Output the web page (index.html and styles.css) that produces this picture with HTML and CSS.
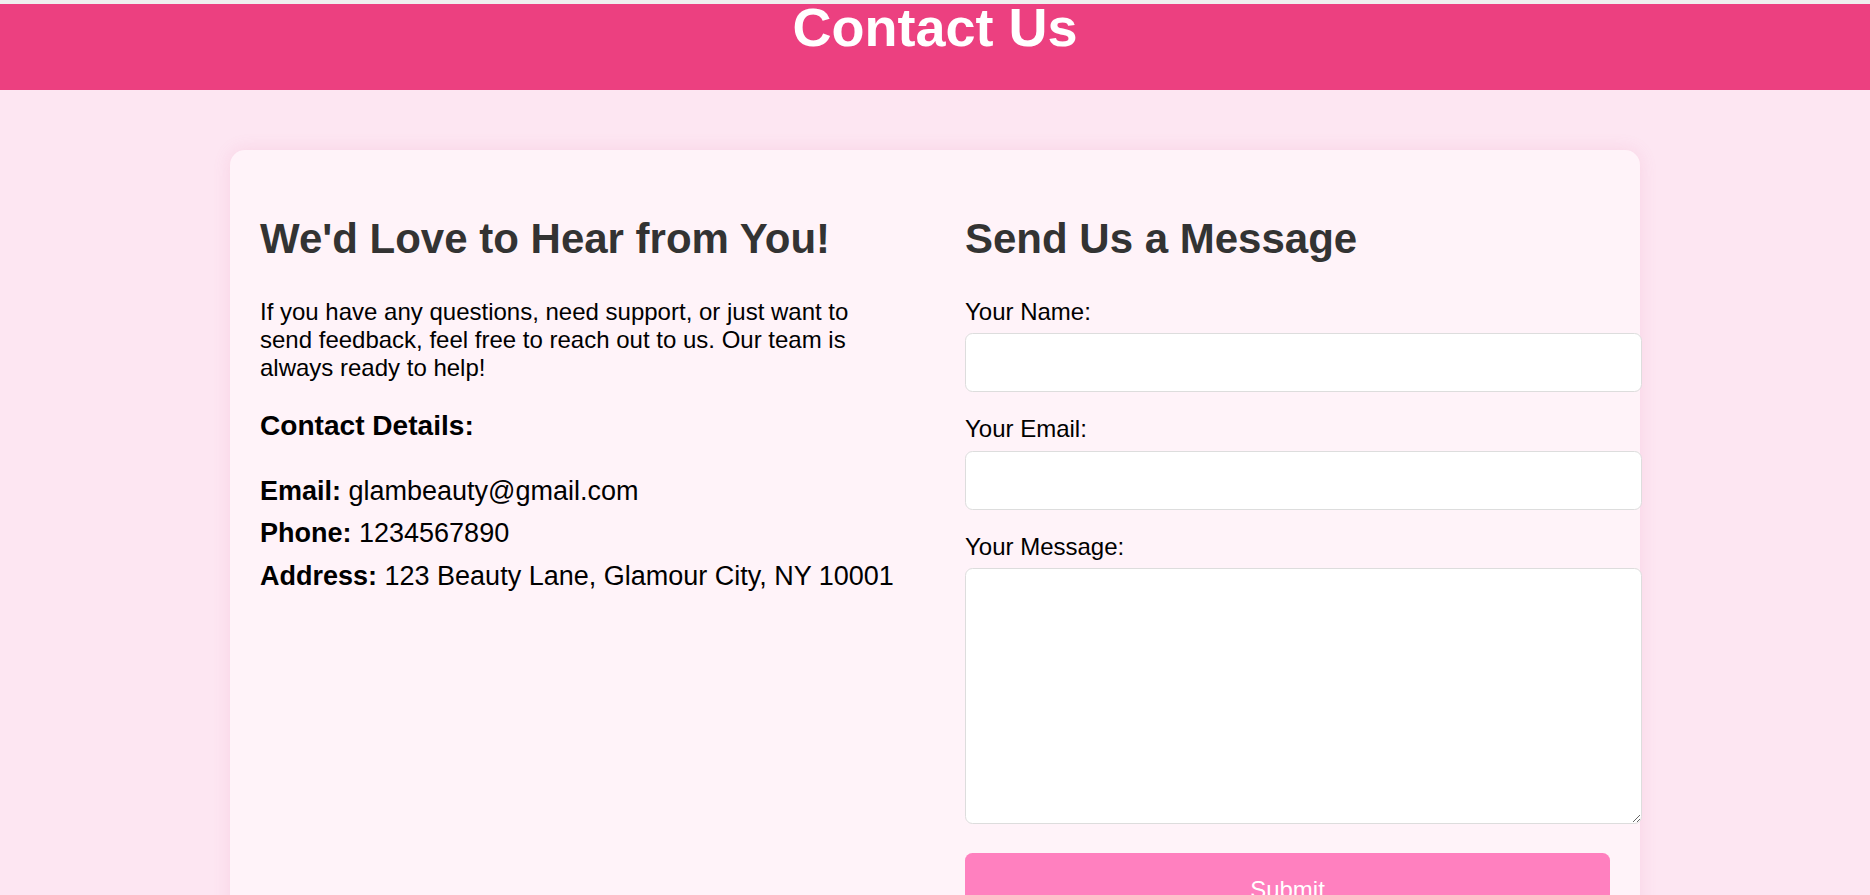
FILE: index.html
```html
<!DOCTYPE html>
<html lang="en">
<head>
<meta charset="utf-8">
<title>Contact Us</title>
<link rel="stylesheet" href="styles.css">
</head>
<body>
<div class="top-strip"></div>
<header class="site-header">
  <h1>Contact Us</h1>
</header>
<main class="contact-card">
  <section class="info">
    <h2>We'd Love to Hear from You!</h2>
    <p class="intro">If you have any questions, need support, or just want to send feedback, feel free to reach out to us. Our team is always ready to help!</p>
    <h3>Contact Details:</h3>
    <p class="detail"><strong>Email:</strong> glambeauty@gmail.com</p>
    <p class="detail"><strong>Phone:</strong> 1234567890</p>
    <p class="detail"><strong>Address:</strong> 123 Beauty Lane, Glamour City, NY 10001</p>
  </section>
  <section class="form-col">
    <h2>Send Us a Message</h2>
    <form class="form">
      <label for="name">Your Name:</label>
      <input id="name" type="text">
      <label for="email">Your Email:</label>
      <input id="email" type="email">
      <label for="msg">Your Message:</label>
      <textarea id="msg"></textarea>
      <button type="button" class="submit">Submit</button>
    </form>
  </section>
</main>
</body>
</html>
```
FILE: styles.css
```css
html, body {
  margin: 0;
  padding: 0;
}
body {
  background: #fde6f2;
  font-family: "Liberation Sans", Arial, sans-serif;
  font-size: 24px;
  color: #000;
  min-height: 895px;
}
.top-strip {
  height: 4px;
  background: #efefef;
}
.site-header {
  background: #ec4080;
  height: 86px;
  padding-top: 2px;
  box-sizing: border-box;
  text-align: center;
}
.site-header h1 {
  margin: 0;
  font-size: 54px;
  line-height: 42px;
  font-weight: bold;
  color: #ffffff;
}
.contact-card {
  width: 1410px;
  box-sizing: border-box;
  margin: 60px auto 0;
  padding: 30px;
  background: #fff3f9;
  border-radius: 15px;
  box-shadow: 0 0 18px rgba(220, 90, 150, 0.14);
  display: grid;
  grid-template-columns: 1fr 1fr;
  column-gap: 60px;
  align-items: start;
}
.info, .form-col {
  min-width: 0;
}
h2 {
  font-size: 42px;
  font-weight: bold;
  color: #333333;
  margin: 34.86px 0;
  line-height: normal;
}
.intro {
  margin: 24px 0;
  font-size: 24px;
}
h3 {
  font-size: 28.08px;
  margin: 28.08px 0;
  font-weight: bold;
}
.detail {
  margin: 0;
  font-size: 27px;
  line-height: 42.5px;
}
.form {
  display: flex;
  flex-direction: column;
  align-items: flex-start;
}
.form label {
  display: block;
  font-size: 24px;
  line-height: normal;
  margin-bottom: 7.5px;
}
.form input,
.form textarea {
  box-sizing: content-box;
  width: 100%;
  padding: 15px;
  border: 1px solid #dddddd;
  border-radius: 7.5px;
  background: #ffffff;
  font-family: "Liberation Sans", Arial, sans-serif;
  font-size: 24px;
  line-height: 27px;
  margin: 0 0 23px;
  outline: none;
}
.form input {
  height: 27px;
}
.form textarea {
  height: 224px;
  margin-bottom: 29px;
  resize: both;
}
.submit {
  width: 100%;
  box-sizing: border-box;
  background: #ff80bf;
  color: #ffffff;
  border: none;
  border-radius: 7.5px;
  padding: 22.5px 0;
  font-family: "Liberation Sans", Arial, sans-serif;
  font-size: 24px;
  line-height: normal;
  cursor: pointer;
}
```
